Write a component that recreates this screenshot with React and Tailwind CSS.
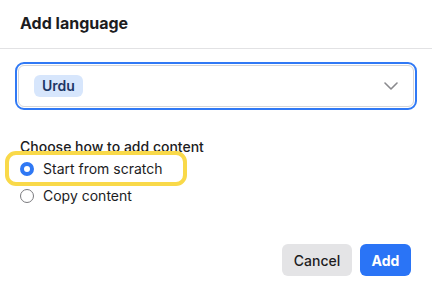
import React from "react";

export default function App() {
  return (
    <div className="w-[432px] h-[301px] bg-white overflow-hidden text-[#1c1c1e]" style={{ fontFamily: "Inter, 'Noto Sans', sans-serif" }}>
      <div className="h-[49px] border-b border-[#e2e2e4] px-5 flex items-center">
        <h1 className="text-[16px] font-bold leading-none mt-[-3px]">Add language</h1>
      </div>
      <div className="mx-[15px] mt-[13px] h-[48px] rounded-[9px] border-2 border-[#3079f5] p-px">
        <div className="h-full rounded-[6px] border border-[#d6d6d8] flex items-center pl-[15px] pr-[15px]">
          <span className="h-[22px] px-2 rounded-[6px] bg-[#d7e6fc] text-[#1d3766] text-[14px] font-semibold leading-[22px]">Urdu</span>
          <svg className="ml-auto" width="14" height="8" viewBox="0 0 14 8" fill="none">
            <path d="M1 1l6 6 6-6" stroke="#8a8a8e" strokeWidth="1.6" strokeLinecap="round" strokeLinejoin="round" />
          </svg>
        </div>
      </div>
      <div className="px-5 mt-[27px]">
        <div className="text-[14px] font-medium leading-[20px]">Choose how to add content</div>
        <div className="mt-[2px] flex flex-col gap-[7px]">
          <div className="relative inline-flex w-fit items-center gap-[9px] h-[20px]">
            <span className="absolute left-[-15px] top-[-8px] bottom-[-7px] right-[-24px] rounded-[11px] border-4 border-[#f9d949]" />
            <span className="w-[14px] h-[14px] rounded-full border-[4px] border-[#2f78f4] bg-white" />
            <span className="text-[14px] leading-[20px]">Start from scratch</span>
          </div>
          <div className="inline-flex w-fit items-center gap-[9px] h-[20px]">
            <span className="w-[14px] h-[14px] rounded-full border border-[#7a7a7e] bg-white" />
            <span className="text-[14px] leading-[20px]">Copy content</span>
          </div>
        </div>
      </div>
      <div className="mt-[38px] pr-[21px] flex justify-end gap-2">
        <button className="h-[32px] w-[70px] rounded-[6px] bg-[#e4e4e6] text-[14px] font-medium text-[#1c1c1e]">Cancel</button>
        <button className="h-[32px] w-[51px] rounded-[6px] bg-[#2a74f6] text-[14px] font-bold text-white">Add</button>
      </div>
    </div>
  );
}
